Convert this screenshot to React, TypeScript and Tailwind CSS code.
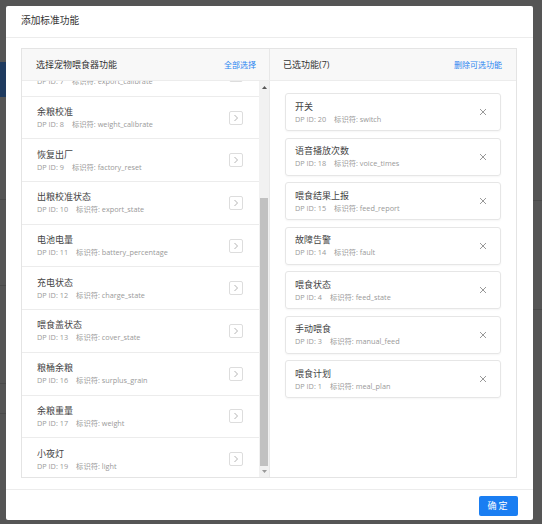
import React from 'react';

const available = [
  { name: '出粮校准', id: 7, code: 'export_calibrate' },
  { name: '余粮校准', id: 8, code: 'weight_calibrate' },
  { name: '恢复出厂', id: 9, code: 'factory_reset' },
  { name: '出粮校准状态', id: 10, code: 'export_state' },
  { name: '电池电量', id: 11, code: 'battery_percentage' },
  { name: '充电状态', id: 12, code: 'charge_state' },
  { name: '喂食盖状态', id: 13, code: 'cover_state' },
  { name: '粮桶余粮', id: 16, code: 'surplus_grain' },
  { name: '余粮重量', id: 17, code: 'weight' },
  { name: '小夜灯', id: 19, code: 'light' },
];

const selected = [
  { name: '开关', id: 20, code: 'switch' },
  { name: '语音播放次数', id: 18, code: 'voice_times' },
  { name: '喂食结果上报', id: 15, code: 'feed_report' },
  { name: '故障告警', id: 14, code: 'fault' },
  { name: '喂食状态', id: 4, code: 'feed_state' },
  { name: '手动喂食', id: 3, code: 'manual_feed' },
  { name: '喂食计划', id: 1, code: 'meal_plan' },
];

const font = { fontFamily: '"Open Sans", "Noto Sans CJK SC", sans-serif' };

const DpLine = ({ id, code }: { id: number; code: string }) => (
  <div className="text-[7.3px] leading-[10px] text-[#999] whitespace-nowrap">
    <span>DP ID: {id}</span>
    <span className="ml-2">标识符: {code}</span>
  </div>
);

const Chevron = () => (
  <div className="w-[14px] h-[14px] border border-[#ddd] rounded-[2px] flex items-center justify-center bg-white">
    <svg width="6" height="8" viewBox="0 0 6 8">
      <polyline points="1.5,1 4.5,4 1.5,7" fill="none" stroke="#aaa" strokeWidth="0.9" />
    </svg>
  </div>
);

const CloseIcon = () => (
  <svg width="8" height="8" viewBox="0 0 8 8">
    <path d="M1 1 L7 7 M7 1 L1 7" stroke="#999" strokeWidth="1" />
  </svg>
);

const App = () => {
  return (
    <div className="w-[542px] h-[524px] bg-[#555] flex overflow-hidden" style={font}>
      {/* page behind the overlay, left edge */}
      <div className="w-[6px] flex flex-col">
        <div className="h-[62px]" />
        <div className="h-[35px] bg-[#1f3b5f]" />
        <div className="h-[102px]" />
        <div className="h-px bg-[#4a4a4a]" />
        <div className="h-[85px]" />
        <div className="h-px bg-[#4a4a4a]" />
        <div className="h-[97px]" />
        <div className="h-px bg-[#4a4a4a]" />
        <div className="h-[29px]" />
        <div className="h-px bg-[#4a4a4a]" />
      </div>

      <div className="mt-[6px] w-[527px] h-[514px] bg-white flex flex-col rounded-[2px]">
        <div className="h-[32px] shrink-0 border-b border-[#ececec] pl-[15px] flex items-center text-[9.7px] text-[#333]">
          添加标准功能
        </div>

        <div className="flex-1 pt-[10px] pb-[11px] pl-[15px] pr-[16px] min-h-0">
          <div className="h-full border border-[#e4e4e4] flex flex-col">
            <div className="h-[32px] shrink-0 grid grid-cols-[248px_1fr] bg-[#f8f8f8] border-b border-[#ececec]">
              <div className="flex items-center justify-between pl-[14px] pr-[13px] border-r border-[#e8e8e8]">
                <span className="text-[9px] text-[#333]">选择宠物喂食器功能</span>
                <span className="text-[8px] text-[#2b85f0]">全部选择</span>
              </div>
              <div className="flex items-center justify-between pl-[13px] pr-[14px]">
                <span className="text-[9px] text-[#333]">已选功能(7)</span>
                <span className="text-[8px] text-[#2b85f0]">删除可选功能</span>
              </div>
            </div>

            <div className="flex-1 min-h-0 grid grid-cols-[248px_1fr]">
              <div className="flex border-r border-[#e8e8e8] min-h-0 overflow-hidden">
                <div className="flex-1 overflow-hidden">
                  <div className="mt-[-27px]">
                    {available.map((f) => (
                      <div
                        key={f.id}
                        className="h-[42.7px] border-b border-[#ececec] pl-[15px] pr-[16px] flex items-center justify-between"
                      >
                        <div className="flex flex-col gap-[1px]">
                          <div className="text-[9px] leading-[12px] text-[#444]">{f.name}</div>
                          <DpLine id={f.id} code={f.code} />
                        </div>
                        <Chevron />
                      </div>
                    ))}
                  </div>
                </div>
                <div className="w-[10px] bg-[#f1f1f1] flex flex-col items-center">
                  <div className="h-[12px] flex items-center justify-center">
                    <svg width="5" height="3" viewBox="0 0 5 3">
                      <polygon points="0,3 5,3 2.5,0" fill="#555" />
                    </svg>
                  </div>
                  <div className="flex-1 w-full flex flex-col">
                    <div className="h-[105px]" />
                    <div className="flex-1 mx-[1px] bg-[#c1c1c1]" />
                  </div>
                  <div className="h-[11px] flex items-center justify-center">
                    <svg width="5" height="3" viewBox="0 0 5 3">
                      <polygon points="0,0 5,0 2.5,3" fill="#999" />
                    </svg>
                  </div>
                </div>
              </div>

              <div className="pt-[12px] px-[15px] flex flex-col gap-[6.5px]">
                {selected.map((f) => (
                  <div
                    key={f.id}
                    className="h-[38px] border border-[#e6e6e6] rounded-[3px] shadow-[0_1px_2px_rgba(0,0,0,0.04)] pl-[9px] pr-[13px] flex items-center justify-between"
                  >
                    <div className="flex flex-col gap-[1px]">
                      <div className="text-[9px] leading-[12px] text-[#444]">{f.name}</div>
                      <DpLine id={f.id} code={f.code} />
                    </div>
                    <CloseIcon />
                  </div>
                ))}
              </div>
            </div>
          </div>
        </div>

        <div className="h-[31px] shrink-0 border-t border-[#ececec] flex justify-end items-start pt-[6px] pr-[15px]">
          <button className="w-[39px] h-[20px] bg-[#1a7ef2] text-white text-[9px] tracking-[2px] rounded-[2px] flex items-center justify-center">
            确定
          </button>
        </div>
      </div>

      {/* page behind the overlay, right edge */}
      <div className="flex-1 flex flex-col">
        <div className="h-[200px]" />
        <div className="h-px bg-[#4a4a4a]" />
        <div className="h-[108px]" />
        <div className="h-px bg-[#4a4a4a]" />
      </div>
    </div>
  );
};

export default App;
